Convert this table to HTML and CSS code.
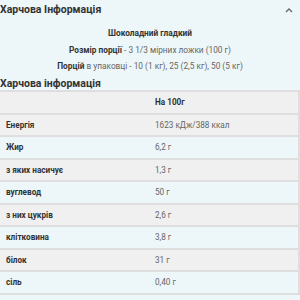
FILE: index.html
```html
<!DOCTYPE html>
<html>
<head>
<meta charset="utf-8">
<link rel="stylesheet" href="styles.css">
</head>
<body>
<div class="panel">
  <div class="head">
    <h2 class="title">Харчова Інформація</h2>
    <svg class="chev" width="8" height="5" viewBox="0 0 8 5"><path d="M1 4 L4 1 L7 4" fill="none" stroke="#666" stroke-width="1.3"/></svg>
  </div>
  <div class="info">
    <p class="flavour">Шоколадний гладкий</p>
    <p><b>Розмір порції</b> - 3 1/3 мірних ложки (100 г)</p>
    <p><b>Порцій</b> в упаковці - 10 (1 кг), 25 (2,5 кг), 50 (5 кг)</p>
  </div>
  <h3 class="subtitle">Харчова інформація</h3>
  <table class="nutri">
    <tr class="g"><td></td><td class="hd">На 100г</td></tr>
    <tr class="g"><td class="lb">Енергія</td><td>1623 кДж/388 ккал</td></tr>
    <tr class="c"><td class="lb">Жир</td><td>6,2 г</td></tr>
    <tr class="g"><td class="lb">з яких насичує</td><td>1,3 г</td></tr>
    <tr class="c"><td class="lb">вуглевод</td><td>50 г</td></tr>
    <tr class="g"><td class="lb">з них цукрів</td><td>2,6 г</td></tr>
    <tr class="c"><td class="lb">клітковина</td><td>3,8 г</td></tr>
    <tr class="g"><td class="lb">білок</td><td>31 г</td></tr>
    <tr class="c"><td class="lb">сіль</td><td>0,40 г</td></tr>
  </table>
</div>
</body>
</html>
```
FILE: styles.css
```css
html, body {
  margin: 0;
  padding: 0;
  background: #edf6f9;
}
.panel {
  width: 300px;
  font-family: Roboto, "Liberation Sans", sans-serif;
  color: #444;
}
.head {
  display: flex;
  justify-content: space-between;
  align-items: center;
  height: 20px;
  padding-right: 7px;
}
.title {
  margin: 0;
  font-size: 10.5px;
  line-height: 20px;
  font-weight: 700;
  color: #333;
}
.info {
  text-align: center;
  font-size: 8.3px;
  color: #666;
  padding-top: 5px;
}
.info p {
  margin: 0;
  height: 16.5px;
  line-height: 16.5px;
}
.info b, .flavour {
  font-weight: 700;
  color: #333;
}
.subtitle {
  margin: 3px 0 0;
  font-size: 10.5px;
  font-weight: 700;
  color: #333;
  height: 12.5px;
  line-height: 12.5px;
}
.nutri {
  width: 300px;
  border-collapse: collapse;
  font-size: 8.2px;
  color: #666;
}
.nutri td {
  height: 20.5px;
  padding: 0 6px;
  border-top: 2px solid #dedede;
  border-right: 2px solid #dedede;
  vertical-align: middle;
}
.nutri td:first-child {
  width: 137px;
  border-right: none;
}
.nutri tr:last-child td {
  border-bottom: 2px solid #dedede;
}
.g { background: #f0f0f0; }
.c { background: #edf6f9; }
.lb, .hd {
  font-weight: 700;
  color: #333;
}
```
